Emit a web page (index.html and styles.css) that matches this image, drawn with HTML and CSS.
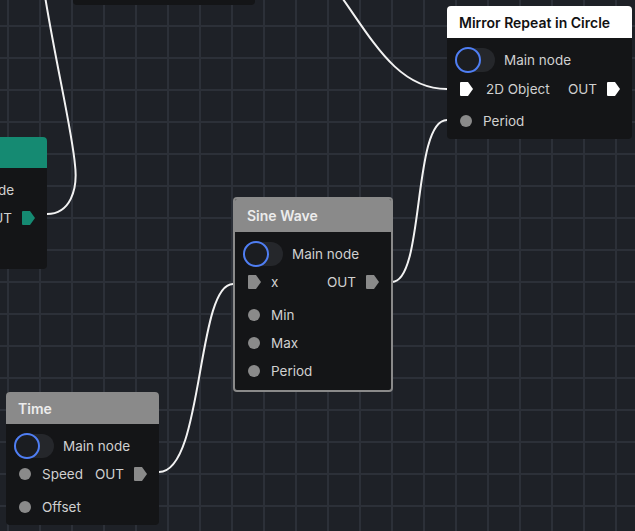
FILE: index.html
```html
<!DOCTYPE html>
<html>
<head>
<meta charset="utf-8">
<link rel="stylesheet" href="styles.css">
</head>
<body>
<div class="canvas">
  <svg class="wires" width="635" height="531" viewBox="0 0 635 531">
    <path d="M 47 214 C 70 214, 78 190, 75 165 C 72 130, 55 60, 44 -10"/>
    <path d="M 335 -12 C 370 35, 395 89, 447 89"/>
    <path d="M 392 282 C 425 282, 412 120, 447 120"/>
    <path d="M 159 472 C 204 472, 196 284, 233 284"/>
  </svg>

  <div class="node node-top"></div>

  <div class="node node-green">
    <div class="node-head head-green"></div>
    <div class="node-body">
      <div class="row toggle-row"><span class="toggle"><span class="knob"></span></span><span class="label">Main node</span></div>
      <div class="row"><span class="slot"></span><span class="fill"></span><span class="label">OUT</span><span class="port-out"><svg width="13" height="14" viewBox="0 0 13 14"><path class="tag tag-green" d="M1 0 H8 L13 7 L8 14 H1 Q0 14 0 13 V1 Q0 0 1 0 Z"/></svg></span></div>
    </div>
  </div>

  <div class="node node-mirror">
    <div class="node-head head-white">Mirror Repeat in Circle</div>
    <div class="node-body">
      <div class="row toggle-row"><span class="toggle"><span class="knob"></span></span><span class="label">Main node</span></div>
      <div class="row"><span class="slot"><svg width="13" height="14" viewBox="0 0 13 14"><path class="tag tag-white" d="M1 0 H8 L13 7 L8 14 H1 Q0 14 0 13 V1 Q0 0 1 0 Z"/></svg></span><span class="label label-wide">2D Object</span><span class="fill"></span><span class="label">OUT</span><span class="port-out"><svg width="13" height="14" viewBox="0 0 13 14"><path class="tag tag-white" d="M1 0 H8 L13 7 L8 14 H1 Q0 14 0 13 V1 Q0 0 1 0 Z"/></svg></span></div>
      <div class="inputs">
        <div class="row"><span class="slot"><span class="dot"></span></span><span class="label">Period</span></div>
      </div>
    </div>
  </div>

  <div class="node node-sine">
    <div class="node-head head-gray">Sine Wave</div>
    <div class="node-body">
      <div class="row toggle-row"><span class="toggle"><span class="knob"></span></span><span class="label">Main node</span></div>
      <div class="row"><span class="slot"><svg width="13" height="14" viewBox="0 0 13 14"><path class="tag tag-gray" d="M1 0 H8 L13 7 L8 14 H1 Q0 14 0 13 V1 Q0 0 1 0 Z"/></svg></span><span class="label">x</span><span class="fill"></span><span class="label">OUT</span><span class="port-out"><svg width="13" height="14" viewBox="0 0 13 14"><path class="tag tag-gray" d="M1 0 H8 L13 7 L8 14 H1 Q0 14 0 13 V1 Q0 0 1 0 Z"/></svg></span></div>
      <div class="inputs">
        <div class="row"><span class="slot"><span class="dot"></span></span><span class="label">Min</span></div>
        <div class="row"><span class="slot"><span class="dot"></span></span><span class="label">Max</span></div>
        <div class="row"><span class="slot"><span class="dot"></span></span><span class="label">Period</span></div>
      </div>
    </div>
  </div>

  <div class="node node-time">
    <div class="node-head head-gray">Time</div>
    <div class="node-body">
      <div class="row toggle-row"><span class="toggle"><span class="knob"></span></span><span class="label">Main node</span></div>
      <div class="row"><span class="slot"><span class="dot"></span></span><span class="label">Speed</span><span class="fill"></span><span class="label">OUT</span><span class="port-out"><svg width="13" height="14" viewBox="0 0 13 14"><path class="tag tag-gray" d="M1 0 H8 L13 7 L8 14 H1 Q0 14 0 13 V1 Q0 0 1 0 Z"/></svg></span></div>
      <div class="inputs">
        <div class="row"><span class="slot"><span class="dot"></span></span><span class="label">Offset</span></div>
      </div>
    </div>
  </div>
</div>
</body>
</html>
```

FILE: styles.css
```css
* { box-sizing: border-box; }

html, body {
  margin: 0;
  padding: 0;
}

body {
  width: 635px;
  height: 531px;
  overflow: hidden;
  font-family: "Inter", "Noto Sans", sans-serif;
}

.canvas {
  position: relative;
  width: 635px;
  height: 531px;
  overflow: hidden;
  background-color: #1e2127;
  background-image:
    linear-gradient(to right, #2c3038 2px, transparent 2px),
    linear-gradient(to bottom, #2c3038 2px, transparent 2px);
  background-size: 32px 32px;
  background-position: 7px 25px;
}

.wires {
  position: absolute;
  left: 0;
  top: 0;
}

.wires path {
  fill: none;
  stroke: #f2f2f2;
  stroke-width: 2;
}

.node {
  position: absolute;
  display: flex;
  flex-direction: column;
  background: #141517;
  border-radius: 4px;
  overflow: hidden;
}

.node-top {
  left: 73px;
  top: -30px;
  width: 182px;
  height: 35px;
}

.node-green {
  left: -110px;
  top: 137px;
  width: 157px;
  height: 132px;
}

.node-mirror {
  left: 447px;
  top: 6px;
  width: 185px;
  height: 133px;
}

.node-sine {
  left: 233px;
  top: 197px;
  width: 160px;
  height: 195px;
  border: 2px solid #8a8a8a;
}

.node-time {
  left: 6px;
  top: 392px;
  width: 153px;
  height: 133px;
}

.node-head {
  height: 32px;
  display: flex;
  align-items: center;
  padding-left: 12px;
  font-size: 14px;
  font-weight: 600;
  flex: none;
}

.head-white {
  background: #ffffff;
  color: #121212;
}

.head-gray {
  background: #8a8a8a;
  color: #ececec;
}

.head-green {
  background: #158a72;
  height: 31px;
}

.node-sine .node-head {
  height: 33px;
}

.node-body {
  display: flex;
  flex-direction: column;
  padding: 8px 12px 4px 12px;
}

.row {
  height: 28px;
  display: flex;
  align-items: center;
  font-size: 13.5px;
  color: #d0d0d0;
}

.toggle-row {
  margin-left: -4px;
}

.inputs {
  display: flex;
  flex-direction: column;
  margin-top: 5px;
}

.node-mirror .inputs {
  margin-top: 3px;
}

.node-mirror .toggle-row + .row {
  height: 30px;
}

.slot {
  width: 14px;
  height: 14px;
  display: flex;
  align-items: center;
  justify-content: center;
  flex: none;
}

.slot svg, .port-out svg {
  display: block;
}

.slot + .label {
  margin-left: 10px;
}

.slot + .label-wide {
  margin-left: 13px;
}

.dot {
  width: 12px;
  height: 12px;
  border-radius: 50%;
  background: #8a8a8a;
}

.fill {
  flex: 1;
}

.port-out {
  margin-left: 10px;
  flex: none;
}

.tag-white { fill: #ffffff; }
.tag-gray { fill: #8a8a8a; }
.tag-green { fill: #158a72; }

.toggle {
  position: relative;
  width: 40px;
  height: 24px;
  border-radius: 12px;
  background: #25272b;
  flex: none;
  margin-right: 9px;
}

.knob {
  position: absolute;
  left: 0;
  top: -1px;
  width: 26px;
  height: 26px;
  border-radius: 50%;
  border: 2.5px solid #4f7ef3;
  background: #1b1d21;
}
```
